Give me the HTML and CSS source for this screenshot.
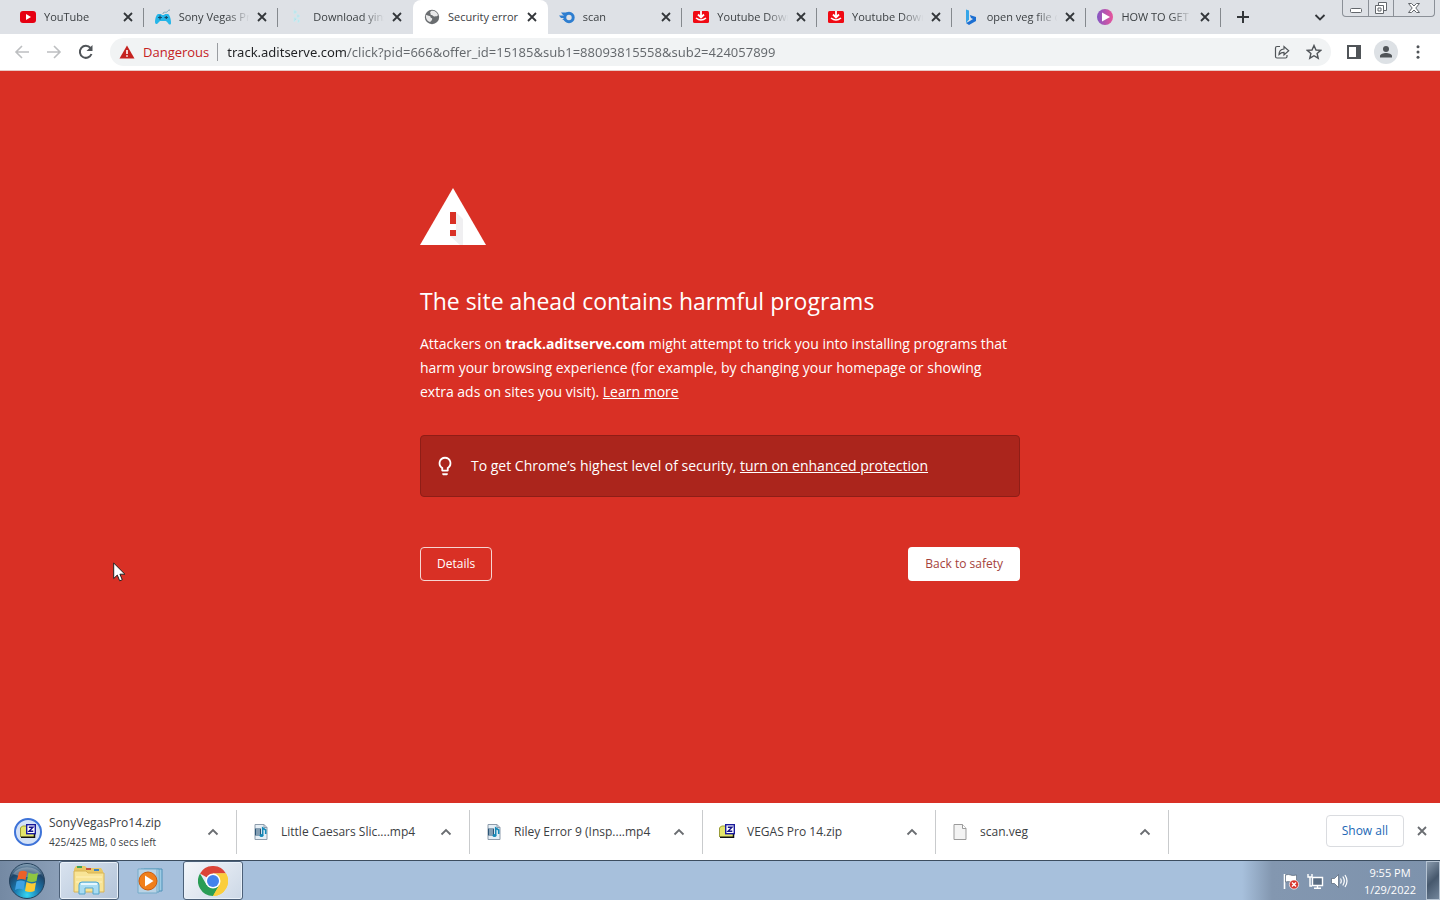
FILE: index.html
```html
<!DOCTYPE html>
<html lang="en">
<head>
    <meta charset="UTF-8">
    <meta name="viewport" content="width=device-width, initial-scale=1.0">
    <title>Security error</title>
    <link rel="stylesheet" href="styles.css">
</head>
<body>
    <!-- shared icons -->
    <svg class="sprite" aria-hidden="true">
        <symbol id="close" viewBox="0 0 16 16"><path d="M4 4l8 8M12 4l-8 8" fill="none" stroke="currentColor" stroke-width="1.8"/></symbol>
        <symbol id="chevron" viewBox="0 0 16 16"><path d="M3.500 10.500L8 6l4.500 4.500" fill="none" stroke="currentColor" stroke-width="1.8"/></symbol>
        <symbol id="ytdown" viewBox="0 0 16 16"><rect y="2" width="16" height="12" rx="1.500" fill="#f00a14"/><path d="M8 2v6M5 5.500l3 3 3-3" fill="none" stroke="#fff" stroke-width="1.800"/><path d="M3 9q5 4 10 0" fill="none" stroke="#fff" stroke-width="1.600"/></symbol>
        <symbol id="zip" viewBox="0 0 16 16"><path d="M0 4l2-2h4v1h8v10H0z" fill="#e4e66a"/><path d="M.5 13V4l2-2H6" fill="none" stroke="#9a9c3a"/><path d="M1 13.300h13.500V10" fill="none" stroke="#111" stroke-width="1.500"/><rect x="6.700" y=".7" width="8.600" height="9" fill="#fff" stroke="#1a1a9c" stroke-width="1.400"/><path d="M8.800 3.200h4.200L9 7.300h4.300" fill="none" stroke="#15158a" stroke-width="1.400"/></symbol>
        <symbol id="media" viewBox="0 0 16 16"><path d="M2 .5h9l3 3v12H2z" fill="#e6eff6" stroke="#8d9cab"/><path d="M11 .5v3h3" fill="none" stroke="#8d9cab"/><path d="M2 4.500h6v7H2z" fill="#2c5577"/><path d="M3 6h4M3 8h4M3 10h4" stroke="#d9e8f0"/><path d="M9.700 11.500V4l3 2v4" fill="none" stroke="#1689b8" stroke-width="1.600"/><ellipse cx="8.500" cy="11.500" rx="2" ry="1.600" fill="#1689b8"/></symbol>
    </svg>

    <div class="tab-strip">
        <div class="tabs">
            <div class="tab">
                <svg viewBox="0 0 16 16"><rect y="2" width="16" height="12" rx="3" fill="#e60012"/><path d="M6 5l5 3-5 3z" fill="#fff"/></svg>
                <span>YouTube</span>
                <button aria-label="Close tab"><svg><use href="#close"/></svg></button>
            </div>
            <div class="tab">
                <svg viewBox="0 0 16 16"><path d="M8 5c0-3 3-1 4-2s1-2 3-2" fill="none" stroke="#7fa9bb"/><path d="M3 5h3l1 1h2l1-1h3c2 1 3 6 3 9 0 2-2 2-3 0l-2-2H5l-2 2c-1 2-3 1-3-1 0-3 1-7 3-8z" fill="#25b5e8"/><path d="M3 8.500h4M5 6.500v4M9.500 8.500h3.500M11.300 7v3" stroke="#174b68" stroke-width="1.200"/></svg>
                <span>Sony Vegas Pro</span>
                <button aria-label="Close tab"><svg><use href="#close"/></svg></button>
            </div>
            <div class="tab before-active">
                <svg viewBox="0 0 16 16"><path d="M5 1l3 2-3 2zM8 5l3 2-3 2zM5 8l3 2-3 3zM9 10l2 2-2 2z" fill="#b4e0e9" stroke="#c9eaf0"/></svg>
                <span>Download yinstall</span>
                <button aria-label="Close tab"><svg><use href="#close"/></svg></button>
            </div>
            <div class="tab active">
                <svg viewBox="0 0 16 16"><circle cx="8" cy="8" r="7.200" fill="#6a6d70"/><path d="M2 6c2 0 2 1 3.500 1S6 9 7.500 9 8 12 6 13C3 12 1.500 9 2 6zM7 2c3-1 6 1 7 4-1 2-2 1-3 1.500-2 .5-2-1.500-3.500-1.500S7 4 6 3.500z" fill="#fff" opacity=".85"/></svg>
                <span>Security error</span>
                <button aria-label="Close tab"><svg><use href="#close"/></svg></button>
            </div>
            <div class="tab">
                <svg viewBox="0 0 16 16"><circle cx="10" cy="8.500" r="4.200" fill="none" stroke="#2e7ed0" stroke-width="3"/><path d="M2 3.500h8L8 6H4zM0 6.500h7L5.500 9H2zM3 10h3.500L8 13z" fill="#2e7ed0"/></svg>
                <span>scan</span>
                <button aria-label="Close tab"><svg><use href="#close"/></svg></button>
            </div>
            <div class="tab">
                <svg><use href="#ytdown"/></svg>
                <span>Youtube Downloader</span>
                <button aria-label="Close tab"><svg><use href="#close"/></svg></button>
            </div>
            <div class="tab">
                <svg><use href="#ytdown"/></svg>
                <span>Youtube Downloader</span>
                <button aria-label="Close tab"><svg><use href="#close"/></svg></button>
            </div>
            <div class="tab">
                <svg viewBox="0 0 16 16"><path d="M3 .5l3 1v9l-3 3.500z" fill="#35a5e8"/><path d="M3 14l3-1.500 4-2.500-2-1-1.200-3L13 8v4l-7 4z" fill="#1c6fd2"/></svg>
                <span>open veg file online</span>
                <button aria-label="Close tab"><svg><use href="#close"/></svg></button>
            </div>
            <div class="tab">
                <svg viewBox="0 0 16 16"><defs><linearGradient id="play" x2="1"><stop stop-color="#8456c4"/><stop offset="1" stop-color="#e8559b"/></linearGradient></defs><circle cx="8" cy="8" r="8" fill="url(#play)"/><path d="M5 3.500l8 4.500-8 4.500z" fill="#fff"/></svg>
                <span>HOW TO GET SONY</span>
                <button aria-label="Close tab"><svg><use href="#close"/></svg></button>
            </div>
        </div>
        <div class="strip-end">
            <button class="new-tab" aria-label="New tab"><svg viewBox="0 0 16 16"><path d="M8 2v12M2 8h12" stroke="currentColor" stroke-width="2"/></svg></button>
            <button class="tab-search" aria-label="Search tabs"><svg viewBox="0 0 16 16"><path d="M3.500 6L8 10.500 12.500 6" fill="none" stroke="currentColor" stroke-width="1.800"/></svg></button>
            <div class="window-buttons">
                <button aria-label="Minimize"><svg viewBox="0 0 14 14"><rect x="1.500" y="7.500" width="11" height="4" rx="1" fill="#fff" stroke="#63676c"/></svg></button>
                <button aria-label="Restore"><svg viewBox="0 0 14 14" fill="#fff" stroke="#63676c"><path d="M4.500 1.500h8v8h-8z"/><path d="M1.500 4.500h8v8h-8z"/><path d="M4 7h3v3H4z"/></svg></button>
                <button class="wide" aria-label="Close"><svg viewBox="0 0 14 14"><path d="M1.500 2.500h3L7 5l2.500-2.500h3L8.800 7l3.700 4.500h-3L7 9l-2.500 2.500h-3L5.200 7z" fill="#fff" stroke="#63676c"/></svg></button>
            </div>
        </div>
    </div>

    <div class="toolbar">
        <button class="nav" aria-label="Back" disabled><svg viewBox="0 0 16 16"><path d="M15 8H2M8 2L2 8l6 6" fill="none" stroke="currentColor" stroke-width="1.600"/></svg></button>
        <button class="nav" aria-label="Forward" disabled><svg viewBox="0 0 16 16"><path d="M1 8h13M8 2l6 6-6 6" fill="none" stroke="currentColor" stroke-width="1.600"/></svg></button>
        <button class="nav" aria-label="Reload"><svg viewBox="0 0 16 16"><path d="M13.500 10A6 6 0 1 1 12.500 4" fill="none" stroke="currentColor" stroke-width="2"/><path d="M14.500 1v6h-6z" fill="currentColor"/></svg></button>
        <div class="omnibox">
            <button class="danger"><svg viewBox="0 0 16 16"><path d="M8 1.500L15.500 14.500H.5z" fill="#c5221f"/><path d="M8 6v4M8 11.200v1.600" stroke="#fff" stroke-width="1.600"/></svg>Dangerous</button>
            <input class="url" type="text" aria-label="Address" value="track.aditserve.com/click?pid=666&amp;offer_id=15185&amp;sub1=88093815558&amp;sub2=424057899">
            <button aria-label="Share"><svg viewBox="0 0 16 16" fill="none" stroke="currentColor" stroke-width="1.200"><path d="M6 2.500H3Q1.500 2.500 1.500 4v8.500Q1.500 14 3 14h8.500q1.500 0 1.500-1.500V11"/><path d="M5 10.500Q5 5.500 10 5V2.500l4.700 4.200L10 11V8.300Q7 8.300 5 10.500z"/></svg></button>
            <button aria-label="Bookmark"><svg viewBox="0 0 16 16"><path d="M8 1.500l2 4.500 4.700.4-3.600 3.100 1.100 4.700L8 11.700l-4.200 2.500 1.100-4.700L1.300 6.400 6 6z" fill="none" stroke="currentColor" stroke-width="1.400"/></svg></button>
        </div>
        <div class="tools">
            <button aria-label="Side panel"><svg viewBox="0 0 16 16"><path d="M2 2h12v12H2z" fill="none" stroke="currentColor" stroke-width="2"/><path d="M10 2h4v12h-4z" fill="currentColor"/></svg></button>
            <button class="avatar" aria-label="Profile"><svg viewBox="0 0 16 16" fill="currentColor"><circle cx="8" cy="5" r="3"/><path d="M2 13.500V12c0-2 3.500-3 6-3s6 1 6 3v1.500z"/></svg></button>
            <button aria-label="Menu"><svg viewBox="0 0 16 16" fill="currentColor"><circle cx="8" cy="2.800" r="1.500"/><circle cx="8" cy="8" r="1.500"/><circle cx="8" cy="13.200" r="1.500"/></svg></button>
        </div>
    </div>

    <main class="page">
        <div class="interstitial">
            <svg class="warning" viewBox="0 0 66 58"><path d="M33 1l33 57H0z" fill="#fff"/><path d="M36 25l7 7v26h-3l-10-9h6z" fill="#f0eff1"/><path d="M30 25h6v12h-6zM30 43h6v6h-6z" fill="#d93025"/></svg>
            <h1>The site ahead contains harmful programs</h1>
            <p>Attackers on <strong>track.aditserve.com</strong> might attempt to trick you into installing programs that harm your browsing experience (for example, by changing your homepage or showing extra ads on sites you visit). <a href="#">Learn more</a></p>
            <div class="promo">
                <svg viewBox="0 0 24 24"><path d="M9 21c0 .5.400 1 1 1h4c.6 0 1-.5 1-1v-1H9zm3-19a7 7 0 0 0-4 12.700V17c0 .5.400 1 1 1h6c.6 0 1-.5 1-1v-2.300A7 7 0 0 0 12 2zm2.800 11.100l-.8.600V16h-4v-2.300l-.8-.6A5 5 0 1 1 17 9c0 1.600-.8 3.200-2.200 4.100z" fill="#fff"/></svg>
                <span>To get Chrome’s highest level of security, <a href="#">turn on enhanced protection</a></span>
            </div>
            <div class="actions">
                <button class="details">Details</button>
                <button class="safety">Back to safety</button>
            </div>
        </div>
    </main>

    <div class="downloads">
        <div class="download in-progress">
            <span class="ring"><svg><use href="#zip"/></svg></span>
            <div class="name">SonyVegasPro14.zip<small>425/425 MB, 0 secs left</small></div>
            <button aria-label="Options"><svg><use href="#chevron"/></svg></button>
        </div>
        <div class="download">
            <svg><use href="#media"/></svg>
            <div class="name">Little Caesars Slic....mp4</div>
            <button aria-label="Options"><svg><use href="#chevron"/></svg></button>
        </div>
        <div class="download">
            <svg><use href="#media"/></svg>
            <div class="name">Riley Error 9 (Insp....mp4</div>
            <button aria-label="Options"><svg><use href="#chevron"/></svg></button>
        </div>
        <div class="download">
            <svg><use href="#zip"/></svg>
            <div class="name">VEGAS Pro 14.zip</div>
            <button aria-label="Options"><svg><use href="#chevron"/></svg></button>
        </div>
        <div class="download">
            <svg viewBox="0 0 16 16"><path d="M2 .5h8.500l3.500 4v11H2z" fill="#f3f3f3" stroke="#9b9b9b"/><path d="M10.500.5v4H14" fill="#fff" stroke="#9b9b9b"/></svg>
            <div class="name">scan.veg</div>
            <button aria-label="Options"><svg><use href="#chevron"/></svg></button>
        </div>
        <div class="shelf-end">
            <button class="show-all">Show all</button>
            <button class="close-shelf" aria-label="Close downloads bar"><svg><use href="#close"/></svg></button>
        </div>
    </div>

    <div class="taskbar">
        <button class="start" aria-label="Start">
            <svg viewBox="0 0 38 38">
                <defs>
                    <radialGradient id="orb" cy=".9" r=".9"><stop stop-color="#36d6f2"/><stop offset=".4" stop-color="#1a78ae"/><stop offset=".75" stop-color="#1d4468"/><stop offset="1" stop-color="#8fa9bd"/></radialGradient>
                </defs>
                <circle cx="19" cy="19" r="17.500" fill="url(#orb)" stroke="#24415c"/>
                <path d="M5 12a16 13 0 0 1 28 0q-14 6-28 0z" fill="#fff" opacity=".3"/>
                <path d="M11 10q4-2.500 8 0l-1.500 8q-4-2-8.500 0z" fill="#ee6128"/>
                <path d="M20.500 10.500q4 2.500 9.500.5l-1.500 8q-4.500 2-9.500 0z" fill="#8fc640"/>
                <path d="M8.500 19.500q4-2 8.500 0L15.500 28q-4-2.500-8.500 0z" fill="#3fa2e4"/>
                <path d="M18.500 20q4.500 2.500 9.500.5L26.500 29q-4.500 2-9.500 0z" fill="#fccb35"/>
            </svg>
        </button>
        <button class="task open" aria-label="Windows Explorer">
            <svg viewBox="0 0 34 32"><path d="M2 4l2-3h9l2 2h14l2 3v21H2z" fill="#e9c865"/><path d="M5 1h5v2H5z" fill="#3da35a"/><path d="M14 3h5v2h-5z" fill="#c8503b"/><path d="M22 4h5v2h-5z" fill="#3c83c2"/><path d="M2 6h12l2 2h16v19H2z" fill="#f8e496" stroke="#d7b457"/><path d="M4 12h26M4 17h26" stroke="#fff2bc"/><path d="M7 29v-9q0-3 3-3h14q3 0 3 3v9h-6v-6h-8v6z" fill="#a9dcf2" stroke="#52a5cd"/><path d="M9 19h16" stroke="#e5f7ff" stroke-width="2"/></svg>
        </button>
        <button class="task media" aria-label="Windows Media Player">
            <svg viewBox="0 0 28 28"><path d="M7 2h18v22H7z" fill="#9ecbe4" stroke="#4f91b8"/><path d="M4 2h18v23H4z" fill="#c3dfed" stroke="#5f9ebf"/><path d="M1 2h19v24H1z" fill="#b9d3e6" stroke="#75abc9"/><circle cx="11" cy="14" r="9" fill="#f07f1c" stroke="#cc5b0c"/><path d="M8 8.500l8.500 5.500L8 19.500z" fill="#fff"/></svg>
        </button>
        <button class="task open chrome" aria-label="Google Chrome">
            <svg viewBox="0 0 30 30"><path d="M15 15L2 7.500A15 15 0 0 1 28 7.500H15z" fill="#dc4437"/><path d="M15 15l6.500-7.500H28A15 15 0 0 1 15 30z" fill="#fbce3c"/><path d="M15 30A15 15 0 0 1 2 7.500l6.500 11.300 13 0z" fill="#2a9d55"/><path d="M15 7.500h13a15 15 0 0 1-13 22.500l6.500-11.200z" fill="#fbce3c"/><circle cx="15" cy="15" r="7.500" fill="#fff"/><circle cx="15" cy="15" r="6" fill="#4383ec"/></svg>
        </button>
        <div class="tray">
            <svg viewBox="0 0 18 18"><path d="M2.500 2v15" stroke="#fff" stroke-width="1.600"/><path d="M3.500 3q3-1 5 0t6 0v7q-4 1-6 0t-5 0z" fill="#fff" stroke="#4b5a6b" stroke-width=".6"/><circle cx="12" cy="12.500" r="4.600" fill="#d8332b" stroke="#fff" stroke-width=".7"/><path d="M10 10.500l4 4M14 10.500l-4 4" stroke="#fff" stroke-width="1.400"/></svg>
            <svg viewBox="0 0 18 18"><path d="M6.500 5.500h10v8h-10z" fill="#5a6d83" stroke="#fff" stroke-width="1.400"/><path d="M11.500 14v2M8 16.300h7M2 2v3h4V2M4 5v9h2" fill="none" stroke="#fff" stroke-width="1.400"/></svg>
            <svg viewBox="0 0 18 18"><path d="M1.500 6.500h3l4-4v13l-4-4h-3z" fill="#fff" stroke="#536376" stroke-width=".7"/><path d="M10.500 6.500q1.500 2.500 0 5M12.800 4.500q3 4.500 0 9M15 3q4 6 0 12" fill="none" stroke="#fff" stroke-width="1.200"/></svg>
            <div class="clock"><time>9:55 PM</time><time>1/29/2022</time></div>
            <button class="show-desktop" aria-label="Show desktop"></button>
        </div>
    </div>

    <svg class="cursor" viewBox="0 0 13 20" aria-hidden="true"><path d="M.7 1v15.500l3.600-3.400 2.400 5.700 2.600-1.100-2.400-5.500h5z" fill="#fff" stroke="#222" stroke-width="1"/></svg>
</body>
</html>
```

FILE: styles.css
```css
* {
    box-sizing: border-box;
}

body {
    margin: 0;
    height: 100vh;
    display: flex;
    flex-direction: column;
    overflow: hidden;
    font-family: "Open Sans", "Noto Sans", sans-serif;
    font-size: 12px;
    color: #3c4043;
    background-color: #fff;
}

button {
    display: flex;
    align-items: center;
    justify-content: center;
    padding: 0;
    border: 0;
    background: none;
    font: inherit;
    color: inherit;
}

svg {
    display: block;
    flex: none;
    width: 16px;
    height: 16px;
}

.sprite {
    position: absolute;
    width: 0;
    height: 0;
}

/* tabs */
.tab-strip {
    display: flex;
    height: 34px;
    padding-left: 9px;
    background-color: #dee1e6;
}

.tabs {
    display: flex;
    flex: 1;
    min-width: 0;
}

.tab {
    display: flex;
    flex: 1;
    align-items: center;
    min-width: 0;
    padding: 0 8px 1px 11px;
    position: relative;
}

.tab::after {
    content: "";
    position: absolute;
    right: 0;
    top: 8px;
    width: 1px;
    height: 19px;
    background-color: #85898e;
}

.tab span {
    flex: 1;
    margin-left: 8px;
    overflow: hidden;
    white-space: nowrap;
    font-size: 11px;
    mask-image: linear-gradient(to right, #000 65%, transparent 94%);
}

.tab button {
    color: #33363a;
}

.tab.active {
    background-color: #fff;
    border-radius: 8px 8px 0 0;
}

.tab.active span {
    mask-image: none;
}

.tab.active::after,
.tab.before-active::after {
    display: none;
}

.strip-end {
    display: flex;
    align-items: center;
    width: 219px;
    padding: 0 5px 0 14px;
    color: #33363a;
}

.tab-search {
    margin-left: auto;
}

.window-buttons {
    display: flex;
    align-self: flex-start;
    height: 17px;
    margin-left: 14px;
    border: 1px solid #8b9097;
    border-top: 0;
    border-radius: 0 0 4px 4px;
}

.window-buttons button {
    width: 25px;
}

.window-buttons button + button {
    border-left: 1px solid #8b9097;
}

.window-buttons .wide {
    width: 41px;
}

.window-buttons svg {
    width: 14px;
    height: 14px;
}

/* toolbar */
.toolbar {
    display: flex;
    align-items: center;
    height: 37px;
    padding: 0 14px;
    border-bottom: 1px solid #e8c9c6;
    color: #505458;
}

.nav {
    width: 16px;
    margin-right: 16px;
}

.nav:disabled {
    color: #bdbfc1;
}

.omnibox {
    display: flex;
    flex: 1;
    align-items: center;
    gap: 16px;
    height: 28px;
    padding: 0 9px;
    border-radius: 14px;
    background-color: #f1f3f4;
    font-size: 13px;
}

.danger {
    gap: 8px;
    padding-right: 8px;
    border-right: 1px solid #9a9da1;
    color: #c5221f;
}

.url {
    flex: 1;
    min-width: 0;
    margin-left: -7px;
    padding: 0;
    border: 0;
    outline: 0;
    font: inherit;
    font-family: "Noto Sans", "Open Sans", sans-serif;
    /* host part darker than the rest of the address */
    color: transparent;
    background: linear-gradient(to right, #202124 121px, #64686c 121px);
    background-clip: text;
}

.tools {
    display: flex;
    align-items: center;
    gap: 12px;
    margin-left: 15px;
}

.avatar {
    width: 24px;
    height: 24px;
    border-radius: 50%;
    background-color: #dde1e5;
}

/* warning page */
.page {
    flex: 1;
    min-height: 0;
    padding-top: 116px;
    background-color: #d93025;
    color: #fff;
}

.interstitial {
    max-width: 600px;
    margin: 0 auto;
    font-size: 14px;
    line-height: 24px;
}

.warning {
    width: 66px;
    height: 58px;
}

h1 {
    margin: 42px 0 16px;
    font-size: 23px;
    font-weight: 400;
    line-height: 29px;
}

p {
    margin: 0;
    padding-right: 4px;
}

.interstitial a {
    color: inherit;
}

.promo {
    display: flex;
    align-items: center;
    gap: 15px;
    margin-top: 31px;
    padding: 18px 13px;
    border: 1px solid #8f1d16;
    border-radius: 4px;
    background-color: #ab251c;
}

.promo svg {
    width: 22px;
    height: 22px;
}

.actions {
    display: flex;
    justify-content: space-between;
    align-items: flex-start;
    margin-top: 50px;
    font-size: 12px;
}

.details,
.safety {
    height: 34px;
    padding: 0 17px;
    border-radius: 4px;
}

.details {
    padding: 0 16px;
    border: 1px solid #f6d5d2;
}

.safety {
    background-color: #fff;
    color: #a5423b;
}

/* downloads shelf */
.downloads {
    display: flex;
    align-items: center;
    height: 57px;
    padding-left: 4px;
}

.download {
    display: flex;
    align-items: center;
    width: 233px;
    height: 44px;
    padding: 0 15px 0 16px;
    border-right: 1px solid #c9cbcd;
}

.download .name {
    flex: 1;
    margin-left: 12px;
    white-space: nowrap;
}

.download button,
.close-shelf {
    color: #6a6d71;
}

.in-progress {
    padding-left: 10px;
}

.in-progress .name {
    margin-left: 7px;
}

.ring {
    display: grid;
    place-items: center;
    width: 28px;
    height: 28px;
    border: 2px solid #3e73d8;
    border-radius: 50%;
    background-color: #d3e1f6;
}

.download small {
    display: block;
    margin-top: 4px;
    font-size: 10px;
}

.shelf-end {
    display: flex;
    gap: 10px;
    margin-left: auto;
    padding: 0 10px 2px 0;
}

.show-all {
    height: 32px;
    padding: 0 15px;
    border: 1px solid #dadce0;
    border-radius: 4px;
    color: #2267b5;
}

/* taskbar */
.taskbar {
    display: flex;
    height: 40px;
    border-top: 1px solid #3c4d5f;
    background-color: #a7c0dc;
}

.start {
    width: 59px;
    padding-right: 5px;
    background: linear-gradient(to right, #7489a3, #8b9fb8);
}

.start svg {
    width: 38px;
    height: 38px;
}

.task {
    width: 60px;
}

.task.open {
    border: 1px solid #4c6078;
    border-radius: 3px;
    background: linear-gradient(135deg, #d9e3ef, #b3c4d9);
    box-shadow: inset 0 0 0 1px #e9f1f9;
}

.task svg {
    width: 34px;
    height: 32px;
}

.task.media {
    width: 64px;
}

.task.media svg {
    width: 28px;
    height: 28px;
}

.task.chrome {
    background: linear-gradient(135deg, #f4f6fa, #ccd8e6);
}

.task.chrome svg {
    width: 30px;
    height: 30px;
}

.tray {
    display: flex;
    align-items: center;
    margin-left: auto;
    padding-left: 40px;
    background: linear-gradient(to right, #a7c0dc, #8397b0 30px, #7d92ac);
    color: #fff;
}

.tray svg {
    width: 18px;
    height: 18px;
    margin-right: 6px;
}

.clock {
    display: flex;
    flex-direction: column;
    align-items: center;
    width: 72px;
    font-size: 11px;
    line-height: 17px;
}

.show-desktop {
    align-self: stretch;
    width: 14px;
    border: 1px solid #b6c4d3;
    background: linear-gradient(135deg, #8a9bad, #46586d 50%, #73869c);
}

.cursor {
    position: absolute;
    left: 113px;
    top: 562px;
    width: 13px;
    height: 20px;
}
```
